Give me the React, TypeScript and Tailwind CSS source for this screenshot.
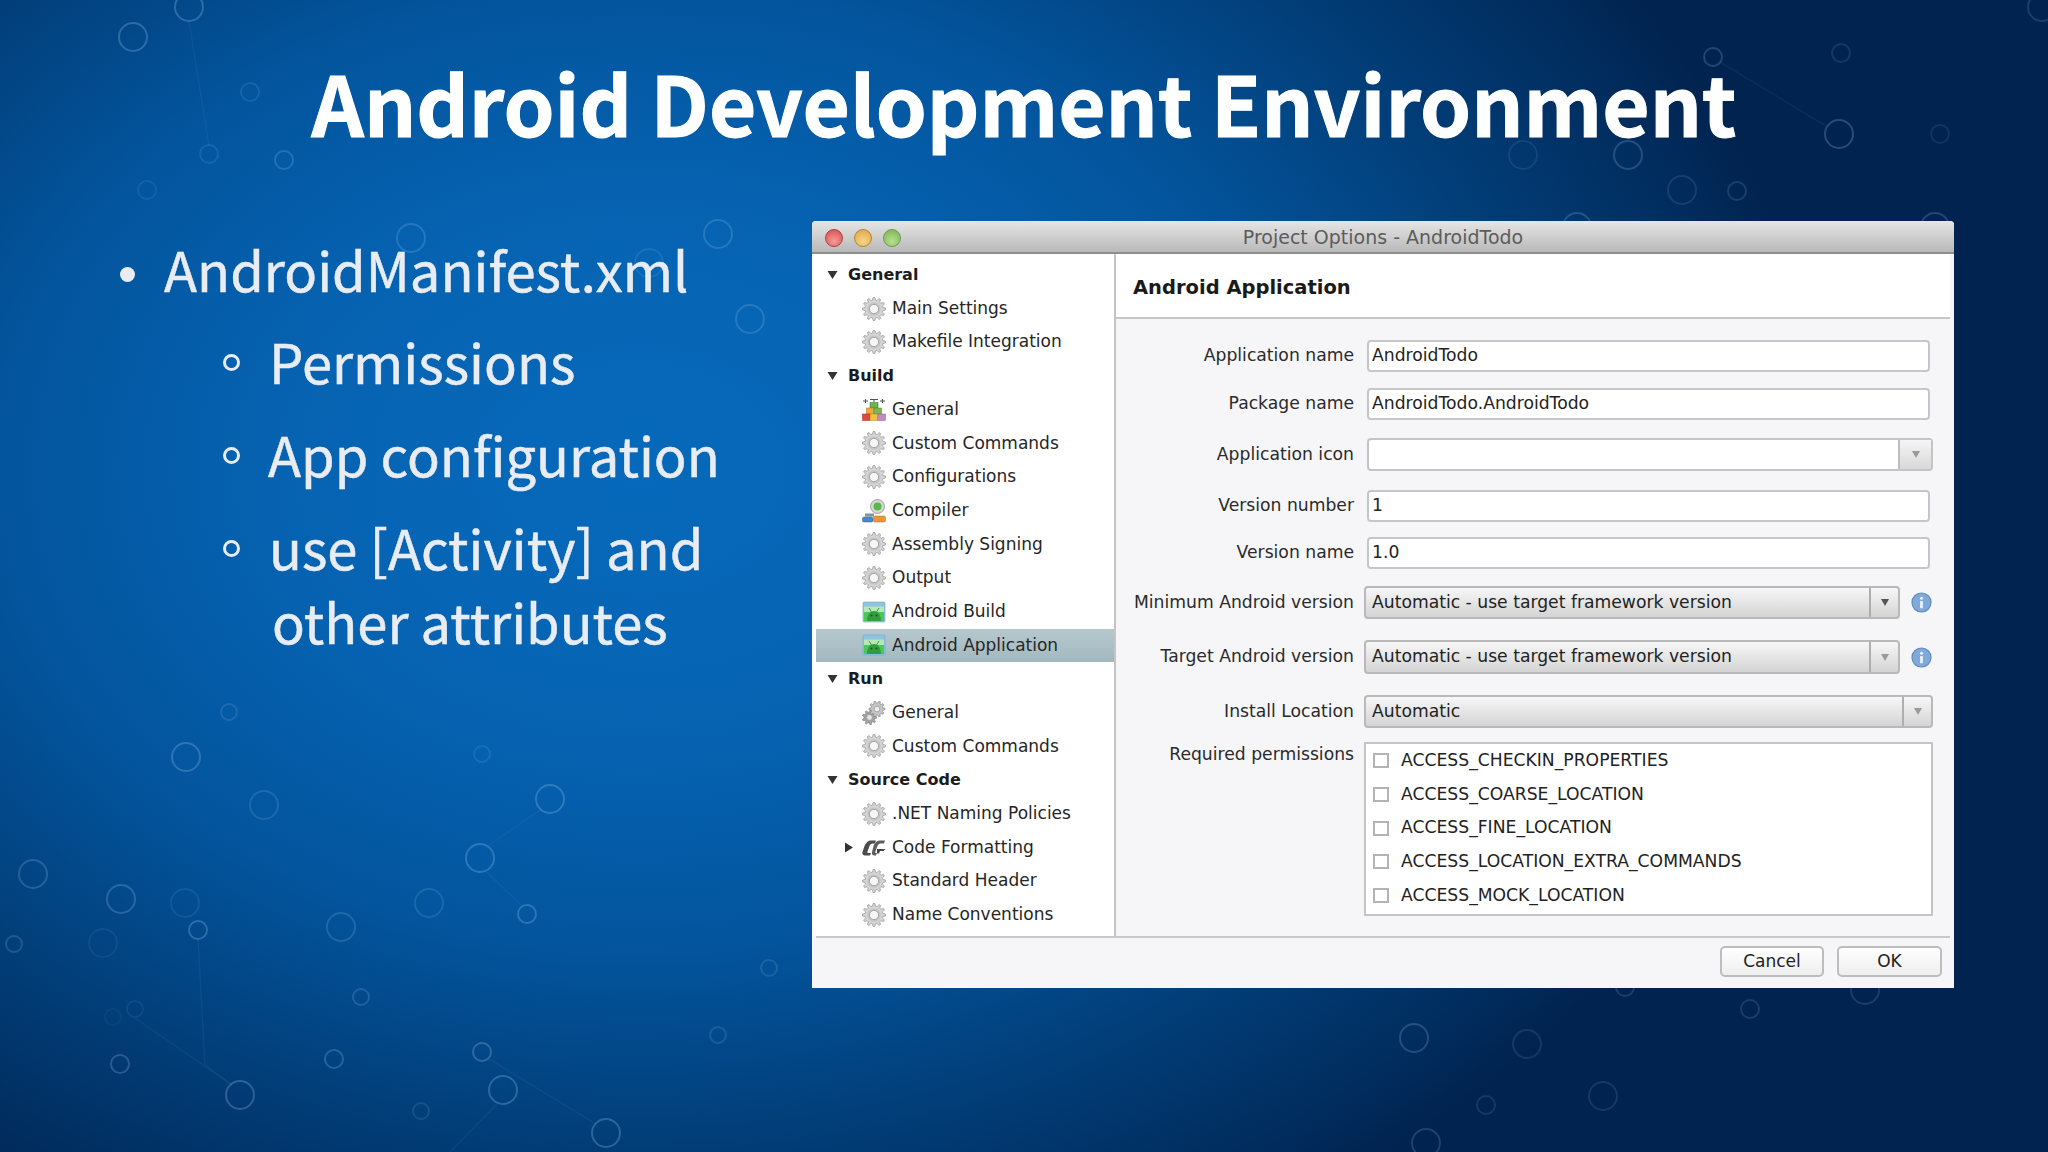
import React from "react";

const SLIDE_FONT = "[font-family:'Noto_Sans_CJK_JP','Noto_Sans',sans-serif]";
const UI_FONT = "[font-family:'DejaVu_Sans','Liberation_Sans',sans-serif]";

// background rings, [x, y, r, strength]
const rings: number[][] = [
  [133, 37, 14, 1], [189, 7, 14, 1], [250, 92, 9, 0.5], [209, 154, 9, 0.5], [284, 160, 9, 0.8], [147, 190, 9, 0.4],
  [411, 238, 14, 0.8], [718, 234, 14, 0.8], [750, 319, 14, 0.8], [649, 263, 14, 0.5],
  [229, 712, 8, 0.6], [186, 757, 14, 1], [264, 805, 14, 0.6], [550, 799, 14, 1], [482, 754, 8, 0.5], [480, 858, 14, 1],
  [33, 874, 14, 0.8], [121, 899, 14, 0.9], [185, 903, 14, 0.4], [198, 930, 9, 1], [103, 943, 14, 0.3], [14, 944, 8, 0.7],
  [429, 903, 14, 0.6], [527, 914, 9, 1], [341, 927, 14, 0.7], [769, 968, 8, 0.6], [361, 997, 8, 0.7], [135, 1009, 8, 0.3],
  [113, 1017, 8, 0.2], [718, 1035, 8, 0.6], [120, 1064, 9, 0.9], [334, 1059, 9, 0.9], [482, 1052, 9, 1], [503, 1090, 14, 1],
  [240, 1095, 14, 1], [421, 1111, 8, 0.5], [606, 1133, 14, 1],
  [1713, 57, 9, 0.8], [1841, 53, 9, 0.5], [1839, 134, 14, 0.9], [1940, 134, 9, 0.4], [1628, 155, 14, 0.8], [1523, 155, 14, 0.4],
  [1682, 190, 14, 0.5], [1737, 191, 9, 0.6], [1577, 227, 14, 0.8], [1935, 227, 14, 0.8], [2042, 7, 14, 0.6],
  [1414, 1038, 14, 0.8], [1527, 1044, 14, 0.5], [1750, 1009, 9, 0.6], [1865, 990, 14, 0.6], [1625, 987, 9, 0.6],
  [1603, 1096, 14, 0.5], [1486, 1105, 9, 0.5], [1426, 1143, 14, 0.7],
];

const links: number[][] = [
  [198, 939, 205, 1065], [205, 1065, 232, 1085], [135, 1018, 232, 1085], [540, 810, 488, 846], [487, 872, 522, 906],
  [489, 1059, 596, 1124], [497, 1104, 450, 1152], [1720, 62, 1826, 126], [189, 21, 209, 146],
];

function gearPath(cx: number, cy: number, outer: number, inner: number, teeth: number) {
  const pts: string[] = [];
  const step = (Math.PI * 2) / teeth;
  for (let i = 0; i < teeth; i++) {
    const a = i * step;
    const at = (r: number, t: number) =>
      `${(cx + r * Math.cos(a + t * step)).toFixed(2)} ${(cy + r * Math.sin(a + t * step)).toFixed(2)}`;
    pts.push(at(inner, -0.32), at(outer, -0.16), at(outer, 0.16), at(inner, 0.32));
  }
  return "M" + pts.join("L") + "Z";
}

const Gear = () => (
  <svg viewBox="0 0 24 24" className="w-[24px] h-[24px]">
    <path d={gearPath(12, 12, 11.5, 9, 12)} fill="#d4d4d4" stroke="#a0a0a0" strokeWidth="0.8" />
    <circle cx="12" cy="12" r="6.6" fill="#c4c4c4" />
    <circle cx="12" cy="12" r="4.6" fill="#f6f6f6" stroke="#999" strokeWidth="0.8" />
  </svg>
);

const RunGear = () => (
  <svg viewBox="0 0 24 24" className="w-[24px] h-[24px]">
    <path d={gearPath(7.5, 16.5, 7.2, 5.4, 9)} fill="#a3a3a3" stroke="#7f7f7f" strokeWidth="0.6" />
    <circle cx="7.5" cy="16.5" r="2.4" fill="#e6e6e6" />
    <path d={gearPath(15, 8, 8, 6, 10)} fill="#c4c4c4" stroke="#7f7f7f" strokeWidth="0.6" />
    <circle cx="15" cy="8" r="2.8" fill="#efefef" stroke="#8a8a8a" strokeWidth="0.6" />
  </svg>
);

const BuildIcon = () => (
  <svg viewBox="0 0 24 24" className="w-[24px] h-[24px]">
    <path d="M1 3h5M3.500 1v4M18 3h5M20.500 1v4M8 1.500h8M12 1.500v3" stroke="#4a5a4a" strokeWidth="1" fill="none" />
    <rect x="8" y="4.500" width="8" height="5.500" fill="#62b84a" stroke="#3c7a30" strokeWidth="0.5" />
    <rect x="4.500" y="10" width="7.500" height="6" fill="#f0a63a" stroke="#b57620" strokeWidth="0.5" />
    <rect x="12" y="10" width="7.500" height="6" fill="#7fb654" stroke="#4f7f30" strokeWidth="0.5" />
    <rect x="0.500" y="16" width="7.600" height="6.500" fill="#e2463e" stroke="#a02a24" strokeWidth="0.5" />
    <rect x="8.100" y="16" width="7.800" height="6.500" fill="#f2c23c" stroke="#b48c20" strokeWidth="0.5" />
    <rect x="15.900" y="16" width="7.600" height="6.500" fill="#c58ac4" stroke="#8a5a8a" strokeWidth="0.5" />
  </svg>
);

const CompilerIcon = () => (
  <svg viewBox="0 0 24 24" className="w-[24px] h-[24px]">
    <circle cx="15.500" cy="7.500" r="7" fill="#d6d6d6" stroke="#8f8f8f" strokeWidth="0.8" />
    <circle cx="15.500" cy="7.500" r="4" fill="#58b848" />
    <path d="M3 14.500h9v3H3z" fill="#7d93ae" />
    <rect x="0.500" y="18" width="10.500" height="5" rx="1.500" fill="#4c86c8" stroke="#2e5f98" strokeWidth="0.5" />
    <rect x="11.500" y="17" width="12" height="6" rx="1.500" fill="#ec9538" stroke="#b06c20" strokeWidth="0.5" />
  </svg>
);

const AndroidIcon = () => (
  <svg viewBox="0 0 24 24" className="w-[24px] h-[24px]">
    <rect x="1" y="2" width="22" height="20" rx="1" fill="#8ec4e2" stroke="#74a9c9" strokeWidth="0.6" />
    <rect x="2" y="6.500" width="20" height="14.500" fill="#b6e8b4" />
    <rect x="2" y="12" width="20" height="9" fill="#4cc85a" />
    <path d="M5 21c0-6.500 3-10 7-10s7 3.500 7 10z" fill="#349c40" />
    <path d="M7 8l2.500 4M17 8l-2.500 4" stroke="#349c40" strokeWidth="1" />
    <circle cx="9.500" cy="15.500" r="1" fill="#14551c" />
    <circle cx="14.500" cy="15.500" r="1" fill="#14551c" />
  </svg>
);

const FormatIcon = () => (
  <svg viewBox="0 0 24 24" className="w-[24px] h-[24px]">
    <path d="M14 4.500h-5c-3 0-5 2-6.500 5.500L0.500 16c-0.600 2 0.400 3.500 2.500 3.500h5l1-2.500H6.500c-1 0-1.400-.5-1-1.500L7.500 10c.6-1.600 1.600-2.600 3-2.600h2.500z" fill="#4c4c4c" />
    <path d="M23 4.500h-5c-3 0-5 2-6.500 5.500L10 16c-.6 2 .4 3.500 2.500 3.500h1.500l1-2.500h-.6c-1 0-1.400-.5-1-1.500L15.500 10c.6-1.600 1.600-2.600 3-2.600H22z" fill="#5e5e5e" />
    <path d="M15 13h8.500l-2 2H18l-1 2.500h-2z" fill="#444" />
  </svg>
);

const Disclosure = ({ open }: { open: boolean }) =>
  open ? (
    <svg viewBox="0 0 10 8" className="w-[11px] h-[8px] shrink-0">
      <path d="M0 0h10L5 8z" fill="#333" />
    </svg>
  ) : (
    <svg viewBox="0 0 8 10" className="w-[8px] h-[11px] shrink-0">
      <path d="M0 0v10l8-5z" fill="#333" />
    </svg>
  );

type TreeRow =
  | { kind: "group"; label: string }
  | { kind: "item"; label: string; icon: React.ReactNode; selected?: boolean; collapsed?: boolean };

const treeRows: TreeRow[] = [
  { kind: "group", label: "General" },
  { kind: "item", label: "Main Settings", icon: <Gear /> },
  { kind: "item", label: "Makefile Integration", icon: <Gear /> },
  { kind: "group", label: "Build" },
  { kind: "item", label: "General", icon: <BuildIcon /> },
  { kind: "item", label: "Custom Commands", icon: <Gear /> },
  { kind: "item", label: "Configurations", icon: <Gear /> },
  { kind: "item", label: "Compiler", icon: <CompilerIcon /> },
  { kind: "item", label: "Assembly Signing", icon: <Gear /> },
  { kind: "item", label: "Output", icon: <Gear /> },
  { kind: "item", label: "Android Build", icon: <AndroidIcon /> },
  { kind: "item", label: "Android Application", icon: <AndroidIcon />, selected: true },
  { kind: "group", label: "Run" },
  { kind: "item", label: "General", icon: <RunGear /> },
  { kind: "item", label: "Custom Commands", icon: <Gear /> },
  { kind: "group", label: "Source Code" },
  { kind: "item", label: ".NET Naming Policies", icon: <Gear /> },
  { kind: "item", label: "Code Formatting", icon: <FormatIcon />, collapsed: true },
  { kind: "item", label: "Standard Header", icon: <Gear /> },
  { kind: "item", label: "Name Conventions", icon: <Gear /> },
];

const Sidebar = () => (
  <div className="w-[304px] shrink-0 bg-white border-r-2 border-[#c4c4c4] pt-[4px]">
    {treeRows.map((row, i) =>
      row.kind === "group" ? (
        <div key={i} className="h-[33.7px] flex items-center pl-[15px]">
          <Disclosure open />
          <span className="ml-[10px] text-[16px] font-bold text-[#1c1c1c]">{row.label}</span>
        </div>
      ) : (
        <div
          key={i}
          className={`h-[33.7px] ml-[4px] flex items-center text-[#262626] ${
            row.selected ? "bg-gradient-to-b from-[#b5c8ce] to-[#a3b8bf]" : ""
          }`}
        >
          <span className="w-[29px] pl-[29px] flex justify-start shrink-0">
            {row.collapsed && <Disclosure open={false} />}
          </span>
          <span className="ml-[17px] shrink-0 flex">{row.icon}</span>
          <span className="ml-[6px]">{row.label}</span>
        </div>
      ),
    )}
  </div>
);

const Label = ({ children }: { children: React.ReactNode }) => (
  <div className="w-[238px] shrink-0 text-right text-[#2a2a2a]">{children}</div>
);

const TextField = ({ label, value, className }: { label: string; value: string; className: string }) => (
  <div className={`flex items-center ${className}`}>
    <Label>{label}</Label>
    <div className="ml-[13px] w-[563px] h-full bg-white border-2 border-[#c6c6c6] rounded-[4px] pl-[3px] flex items-center text-[#222]">
      {value}
    </div>
  </div>
);

const Arrow = ({ faded }: { faded?: boolean }) => (
  <svg viewBox="0 0 8 7" className="w-[8px] h-[7px]">
    <path d="M0 0h8L4 7z" fill={faded ? "#9a9a9a" : "#555"} />
  </svg>
);

const InfoIcon = () => (
  <svg viewBox="0 0 22 22" className="w-[21px] h-[21px] ml-[11px] shrink-0">
    <circle cx="11" cy="11" r="10" fill="#7fa9d8" stroke="#5f8cc0" strokeWidth="1.2" />
    <circle cx="11" cy="6.500" r="1.600" fill="#e8f0fa" />
    <rect x="9.500" y="9.500" width="3" height="7.500" fill="#e8f0fa" />
  </svg>
);

const SelectField = ({
  label,
  value,
  className,
  width,
  info,
  faded,
}: {
  label: string;
  value: string;
  className: string;
  width: string;
  info?: boolean;
  faded?: boolean;
}) => (
  <div className={`flex items-center ${className}`}>
    <Label>{label}</Label>
    <div
      className={`ml-[10px] ${width} h-full flex border-2 border-[#b9b9b9] rounded-[4px] bg-gradient-to-b from-[#f7f7f7] to-[#d4d4d4] text-[#222]`}
    >
      <div className="flex-1 pl-[6px] flex items-center">{value}</div>
      <div className="w-[29px] border-l-2 border-[#aeaeae] flex items-center justify-center">
        <Arrow faded={faded} />
      </div>
    </div>
    {info && <InfoIcon />}
  </div>
);

const permissions = [
  "ACCESS_CHECKIN_PROPERTIES",
  "ACCESS_COARSE_LOCATION",
  "ACCESS_FINE_LOCATION",
  "ACCESS_LOCATION_EXTRA_COMMANDS",
  "ACCESS_MOCK_LOCATION",
];

const Permissions = () => (
  <div className="flex mt-[14px] h-[174px]">
    <div className="w-[238px] shrink-0 text-right text-[#2a2a2a]">Required permissions</div>
    <div className="ml-[10px] w-[569px] bg-white border-2 border-[#c4c4c4]">
      {permissions.map((p) => (
        <div key={p} className="h-[33.7px] flex items-center pl-[7px] text-[#222]">
          <span className="w-[16px] h-[15px] border-2 border-[#b4b4b4] bg-white shrink-0" />
          <span className="ml-[12px]">{p}</span>
        </div>
      ))}
    </div>
  </div>
);

const FormPanel = () => (
  <div className="flex-1 min-w-0 flex flex-col bg-[#f6f6f8] text-[17.2px]">
    <div className="h-[65px] shrink-0 bg-white border-b-2 border-[#c6c8c8] mr-[4px] pt-[4px] flex items-center pl-[17px] text-[19.5px] font-bold text-[#1a1a1a]">
      Android Application
    </div>
    <TextField label="Application name" value="AndroidTodo" className="h-[32px] mt-[21px]" />
    <TextField label="Package name" value="AndroidTodo.AndroidTodo" className="h-[32px] mt-[16px]" />
    <div className="flex items-center h-[33px] mt-[18px]">
      <Label>Application icon</Label>
      <div className="ml-[13px] w-[566px] h-full flex bg-white border-2 border-[#c4c4c4] rounded-[4px]">
        <div className="flex-1" />
        <div className="w-[33px] border-l-2 border-[#bdbdbd] bg-gradient-to-b from-[#f5f5f5] to-[#d8d8d8] flex items-center justify-center">
          <Arrow faded />
        </div>
      </div>
    </div>
    <TextField label="Version number" value="1" className="h-[32px] mt-[19px]" />
    <TextField label="Version name" value="1.0" className="h-[32px] mt-[15px]" />
    <SelectField
      label="Minimum Android version"
      value="Automatic - use target framework version"
      className="h-[33px] mt-[17px]"
      width="w-[536px]"
      info
    />
    <SelectField
      label="Target Android version"
      value="Automatic - use target framework version"
      className="h-[34px] mt-[21px]"
      width="w-[536px]"
      info
      faded
    />
    <SelectField label="Install Location" value="Automatic" className="h-[33px] mt-[21px]" width="w-[569px]" faded />
    <Permissions />
  </div>
);

const DialogButton = ({ label, className }: { label: string; className: string }) => (
  <div
    className={`h-[31px] flex items-center justify-center border-2 border-[#bdbdbd] rounded-[5px] bg-gradient-to-b from-[#ffffff] to-[#eeeeee] text-[#222] ${className}`}
  >
    {label}
  </div>
);

const ProjectOptionsWindow = () => (
  <div className={`w-[1142px] h-[767px] flex flex-col bg-[#f6f6f8] rounded-t-[4px] overflow-hidden text-[17px] ${UI_FONT}`}>
    <div className="h-[33px] shrink-0 relative pt-[2px] flex items-center justify-center bg-gradient-to-b from-[#e6e6e6] to-[#b9b9b9] border-b-2 border-[#8e8e8e] text-[19px] text-[#5c5c5c]">
      <div className="absolute left-[13px] top-[8px] flex gap-[11px]">
        <span className="w-[18px] h-[18px] rounded-full bg-[radial-gradient(circle_at_50%_70%,#f59a9a,#d84a4a)] border border-[#a84040]" />
        <span className="w-[18px] h-[18px] rounded-full bg-[radial-gradient(circle_at_50%_70%,#f8d58a,#e0a040)] border border-[#b08838]" />
        <span className="w-[18px] h-[18px] rounded-full bg-[radial-gradient(circle_at_50%_70%,#b8e090,#78b050)] border border-[#6e9a50]" />
      </div>
      Project Options - AndroidTodo
    </div>
    <div className="flex-1 min-h-0 flex">
      <Sidebar />
      <FormPanel />
    </div>
    <div className="h-[52px] shrink-0 border-t-2 border-[#c8c8c8] ml-[4px] mr-[4px] bg-[#f6f6f8] flex justify-end pt-[8px] pr-[8px] gap-[13px]">
      <DialogButton label="Cancel" className="w-[104px]" />
      <DialogButton label="OK" className="w-[105px]" />
    </div>
  </div>
);

const SubItem = ({ children, className }: { children: React.ReactNode; className: string }) => (
  <div className={`flex items-start ${className}`}>
    <span className="w-[17px] h-[17px] rounded-full border-[3px] border-[#e9edf3] shrink-0 mt-[30px]" />
    {children}
  </div>
);

export default function App() {
  return (
    <div className="relative w-[2048px] h-[1152px] overflow-hidden bg-[radial-gradient(ellipse_1180px_880px_at_640px_470px,#0769bb_0%,#0663b2_30%,#03549c_55%,#023f7a_75%,#012a5a_95%,#01234f_100%)]">
      <svg className="absolute inset-0" width="2048" height="1152" viewBox="0 0 2048 1152">
        {links.map(([x1, y1, x2, y2], i) => (
          <line key={i} x1={x1} y1={y1} x2={x2} y2={y2} stroke="#7fb2e0" strokeOpacity="0.08" strokeWidth="1.500" />
        ))}
        {rings.map(([x, y, r, s], i) => (
          <circle key={i} cx={x} cy={y} r={r} fill="none" stroke="#8dbce6" strokeOpacity={0.3 * s} strokeWidth="2" />
        ))}
      </svg>
      <div className="relative flex flex-col h-full">
        <div className={`h-[221px] shrink-0 pt-[42px] text-center text-white font-bold text-[81.7px] leading-[120px] [-webkit-text-stroke:1px_#fff] ${SLIDE_FONT}`}>
          Android Development Environment
        </div>
        <div className="flex flex-1 min-h-0">
          <div className={`w-[812px] shrink-0 text-[#e9edf3] text-[54.3px] [-webkit-text-stroke:0.5px_#e9edf3] ${SLIDE_FONT}`}>
            <div className="flex items-start pl-[120px] mt-[11px] leading-[74px]">
              <span className="w-[15px] h-[15px] rounded-full bg-[#e9edf3] shrink-0 mt-[35px]" />
              <span className="ml-[29px]">AndroidManifest.xml</span>
            </div>
            <div className="pl-[223px] leading-[74px]">
              <SubItem className="mt-[18px]">
                <span className="ml-[29px]">Permissions</span>
              </SubItem>
              <SubItem className="mt-[19px]">
                <span className="ml-[28px]">App configuration</span>
              </SubItem>
              <SubItem className="mt-[19px]">
                <span className="ml-[29px]">
                  use [Activity] and
                  <br />
                  <span className="ml-[3px]">other attributes</span>
                </span>
              </SubItem>
            </div>
          </div>
          <ProjectOptionsWindow />
        </div>
      </div>
    </div>
  );
}
